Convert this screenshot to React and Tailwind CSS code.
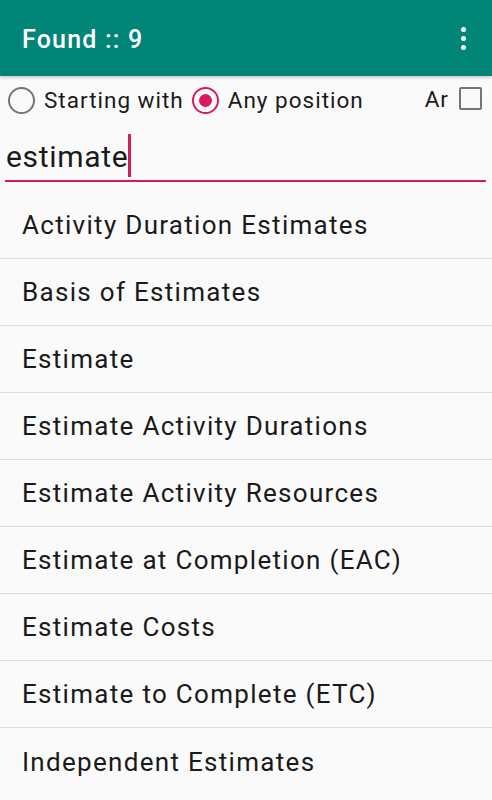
import React from "react";

const items = [
  "Activity Duration Estimates",
  "Basis of Estimates",
  "Estimate",
  "Estimate Activity Durations",
  "Estimate Activity Resources",
  "Estimate at Completion (EAC)",
  "Estimate Costs",
  "Estimate to Complete (ETC)",
  "Independent Estimates",
];

export default function App() {
  return (
    <div
      className="w-[492px] h-[800px] bg-[#fafafa] overflow-hidden flex flex-col"
      style={{ fontFamily: "Roboto, 'Noto Sans', sans-serif" }}
    >
      <div className="h-[76px] shrink-0 bg-[#008577] flex items-center justify-between pl-[22px] pr-[26px] shadow-[0_2px_3px_rgba(0,0,0,0.18)] relative z-10">
        <span className="text-white text-[25px] font-medium leading-none tracking-[1.2px] mt-[3px]">Found :: 9</span>
        <div className="flex flex-col gap-[4px] items-center">
          <span className="block w-[5px] h-[5px] rounded-full bg-white" />
          <span className="block w-[5px] h-[5px] rounded-full bg-white" />
          <span className="block w-[5px] h-[5px] rounded-full bg-white" />
        </div>
      </div>

      <div className="h-[48px] shrink-0 flex items-center pl-[8px] pr-[10px]">
        <div className="flex items-center">
          <span className="w-[27px] h-[27px] rounded-full border-[2.5px] border-[#757575] box-border" />
          <span className="ml-[9px] text-[22.5px] text-[#1a1a1a] leading-none tracking-[1px]">Starting with</span>
        </div>
        <div className="flex items-center ml-[8px]">
          <span className="w-[27px] h-[27px] rounded-full border-[2.5px] border-[#d81b60] box-border flex items-center justify-center">
            <span className="w-[13px] h-[13px] rounded-full bg-[#d81b60]" />
          </span>
          <span className="ml-[9px] text-[22.5px] text-[#1a1a1a] leading-none tracking-[1px]">Any position</span>
        </div>
        <div className="ml-auto flex items-start self-stretch pt-[11px]">
          <span className="text-[22.5px] text-[#1a1a1a] leading-none mt-[1px] tracking-[1px]">Ar</span>
          <span className="ml-[10px] w-[23px] h-[23px] rounded-[2px] border-[2.5px] border-[#757575] box-border" />
        </div>
      </div>

      <div className="shrink-0 mx-[5px] mr-[6px] h-[58px] flex items-end border-b-[2px] border-[#d81b60] pb-[8px]">
        <span className="text-[30px] text-[#1a1a1a] leading-none pl-[1px] tracking-[0.7px]">estimate</span>
        <span className="w-[3px] h-[43px] bg-[#d81b60] mb-[-5px]" />
      </div>

      <div className="mt-[10px] flex flex-col">
        {items.map((t, i) => (
          <div
            key={t}
            className={`h-[67px] shrink-0 flex items-center pl-[22px] ${
              i < items.length - 1 ? "border-b border-[#dedede]" : ""
            }`}
          >
            <span className="text-[26px] text-[#1a1a1a] leading-none tracking-[1.3px]">{t}</span>
          </div>
        ))}
      </div>
    </div>
  );
}
